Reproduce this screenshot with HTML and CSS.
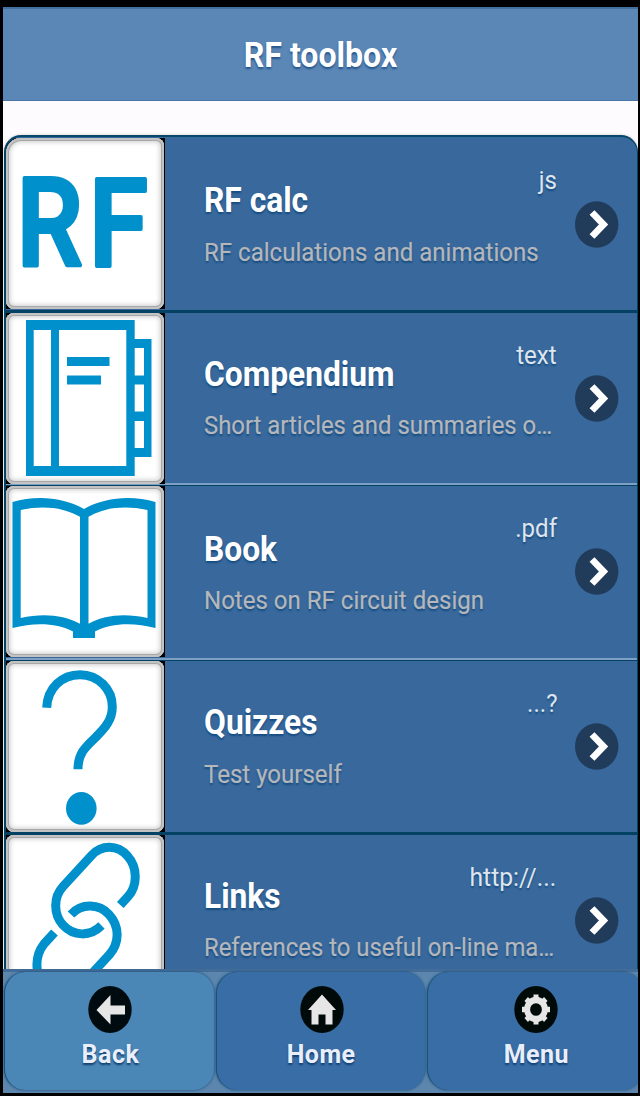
FILE: index.html
```html
<!DOCTYPE html>
<html lang="en">
<head>
<meta charset="utf-8">
<title>RF toolbox</title>
<link rel="stylesheet" href="styles.css">
</head>
<body>
<svg class="defs" width="0" height="0" aria-hidden="true">
  <symbol id="chevron" viewBox="0 0 44 47"><ellipse cx="21.700" cy="23.5" rx="21.700" ry="23.3" fill="#213b5b"/><path d="M17 11.5L28.500 23.5L17 35.5" fill="none" stroke="#fff" stroke-width="6.8"/></symbol>
</svg>
<div class="app">
  <header class="header"><h1 class="header-title">RF toolbox</h1></header>
  <main class="content">
    <ul class="list">
      <li class="row row-first">
        <div class="thumb">
          <svg class="art" viewBox="0 0 158 171"><g class="letters"><text transform="translate(10.800 128) scale(.85 1)">R</text><text transform="translate(83 128) scale(.87 1)">F</text></g></svg>
        </div>
        <div class="text"><h2 class="title">RF calc</h2><p class="sub">RF calculations and animations</p></div>
        <span class="aside">js</span>
        <svg class="chevron"><use href="#chevron"/></svg>
      </li>
      <li class="row row-compendium">
        <div class="thumb">
          <svg class="art" viewBox="0 0 158 171"><path class="fill" fill-rule="evenodd" d="M20 7H128.7V26H145.5V144H128.7V163H20ZM27.7 17V153H45V17ZM53 17V153H120.3V17ZM128.7 35V62.5H138V35ZM128.7 71.5V98.5H138V71.5ZM128.7 108V135H138V108ZM61 44H103.5V53H61ZM61 62.5H95V71.5H61Z"/></svg>
        </div>
        <div class="text"><h2 class="title">Compendium</h2><p class="sub">Short articles and summaries o…</p></div>
        <span class="aside">text</span>
        <svg class="chevron"><use href="#chevron"/></svg>
      </li>
      <li class="row row-book">
        <div class="thumb">
          <svg class="art" viewBox="0 0 158 171"><path class="fill" fill-rule="evenodd" d="M6.5 16C29 9.500 56 10.500 78 23C100 10.500 127 9.500 149.500 16V142C127 136 105 137 89 145.500V152H67V145.500C51 137 29 136 6.500 142ZM14.700 24V132C36 127 57 128.500 74 137.700V30.700C57 21 36 19.500 14.700 24ZM82.500 30.700V137.700C99 128.500 120 127 141.500 132V24C120 19.500 99 21 82.500 30.700Z"/></svg>
        </div>
        <div class="text"><h2 class="title">Book</h2><p class="sub">Notes on RF circuit design</p></div>
        <span class="aside">.pdf</span>
        <svg class="chevron"><use href="#chevron"/></svg>
      </li>
      <li class="row row-quizzes">
        <div class="thumb">
          <svg class="art" viewBox="0 0 158 171"><path class="line" d="M40.700 46.700C41.500 27 56 13.700 74 13.700C92 13.700 106.300 28 106.300 45.700C106.300 59 99 67 90 76C80 85.500 72 92 72 108.300"/><ellipse class="fill" cx="75.300" cy="147.300" rx="15.300" ry="16.400"/></svg>
        </div>
        <div class="text"><h2 class="title">Quizzes</h2><p class="sub">Test yourself</p></div>
        <span class="aside">...?</span>
        <svg class="chevron"><use href="#chevron"/></svg>
      </li>
      <li class="row row-links">
        <div class="thumb">
          <svg class="art" viewBox="0 0 158 171"><path class="line" d="M114.300 70L122 61.500C132 50.500 131.500 32 121.500 21C111.500 9.500 95.500 9.500 85.500 20.500L57 51.500C47 62.500 47.500 79.500 57 90C67.500 101.500 84 102 95.500 90.500M65 79.500C75.500 68 93 68.500 103 79.500C113.500 91 114 107 103.500 119.500L75 150.500C64 161.500 49 161 38.500 150C28.500 139 28.500 121 38 109L48.500 97.500"/></svg>
        </div>
        <div class="text"><h2 class="title">Links</h2><p class="sub">References to useful on-line ma…</p></div>
        <span class="aside">http://...</span>
        <svg class="chevron"><use href="#chevron"/></svg>
      </li>
    </ul>
  </main>
  <nav class="footer">
    <a class="tab tab-active">
      <svg class="tab-icon" viewBox="0 0 44 47"><ellipse cx="22" cy="23.500" rx="21.700" ry="23.500" fill="#000b10"/><path d="M8.500 24L22.500 9V19.500H37V28.500H22.500V38.500Z" fill="#e6e6e6"/></svg>
      <span class="tab-label">Back</span>
    </a>
    <a class="tab">
      <svg class="tab-icon" viewBox="0 0 44 47"><ellipse cx="22" cy="23.500" rx="21.700" ry="23.500" fill="#000a09"/><path d="M22 8.500L36 24H32.500V38.500H25.500V28.500H18.500V38.500H11.500V24H8Z" fill="#e6e6e6"/></svg>
      <span class="tab-label">Home</span>
    </a>
    <a class="tab">
      <svg class="tab-icon" viewBox="0 0 44 47"><ellipse cx="22" cy="23.500" rx="21.700" ry="23.500" fill="#000a09"/><g transform="translate(22 23.500) scale(1 1.070)"><circle r="8.900" fill="none" stroke="#e6e6e6" stroke-width="6"/><path d="M0-14V-10M0 14V10M-14 0H-10M14 0H10M-9.800-9.800L-7-7M9.800-9.800L7-7M-9.800 9.800L-7 7M9.800 9.800L7 7" stroke="#e6e6e6" stroke-width="5"/></g></svg>
      <span class="tab-label">Menu</span>
    </a>
  </nav>
</div>
</body>
</html>
```
FILE: styles.css
```css
* { box-sizing: border-box; }
body { margin: 0; height: 1096px; padding: 7px 2px 3px 3px; overflow: hidden; background: #000; font-family: Roboto, "Liberation Sans", sans-serif; }
h1, h2, p, ul { margin: 0; padding: 0; }
.defs { display: block; height: 0; }
.app { height: 1086px; display: flex; flex-direction: column; overflow: hidden; background: #fefbff; }

.header { flex: none; height: 94px; display: flex; align-items: center; justify-content: center; background: #5a87b6; border-top: 2px solid #42709f; border-bottom: 1px solid #4875a5; }
.header-title { color: #fff; font-size: 34.500px; line-height: 40px; font-weight: 700; text-shadow: 0 2px 2px #25558a; transform: scaleX(.93); }

.content { flex: 1; min-height: 0; overflow: hidden; padding: 34px 0 0 1px; }
.list { list-style: none; overflow: hidden; height: 860px; border: 2px solid #044264; border-right-width: 1px; border-top-color: #07476b; border-radius: 17px 17px 0 0; background: #39699c; box-shadow: 0 0 3px #0003; }
.row { --drop: 0px; height: 174px; display: grid; grid-template-columns: 159px 1fr 44px 18px; border-bottom: 2px solid #044264; }
.row-first { height: 176px; border-bottom-width: 3px; --drop: 1px; }
.row-compendium { height: 173px; border-bottom: 0; box-shadow: inset 0 -1px #044264, inset 0 -3px #7da0c4; }
.row-book { height: 175px; border-bottom: 1px solid #044264; box-shadow: inset 0 -2px #7da0c4; }
.row-quizzes { height: 174px; border-bottom-width: 3px; }
.thumb { grid-area: 1 / 1; width: 159px; height: 171px; background: #000; }
.art { display: block; width: 158px; height: 171px; background: #fff; border-radius: 8px; box-shadow: inset 0 0 0 2px #c3c3c3, inset 0 0 0 3px #a8a8a8, inset 0 0 5px 4px #ccc; }
.row-first .thumb { margin-top: 1px; }
.row-first .art { border-top-left-radius: 15px; }
.fill { fill: #0090cb; }
.line { fill: none; stroke: #0090cb; stroke-width: 9; }
.letters { font: 500 123px Roboto, sans-serif; fill: #0090cb; stroke: #0090cb; stroke-width: 4; stroke-linejoin: round; }
.text { grid-area: 1 / 2; min-width: 0; padding: calc(41px + var(--drop)) 0 0 39px; white-space: nowrap; }
.row-first .text { padding-top: 43px; }
.row-book .text { padding-top: 43px; }
.title { width: max-content; color: #fff; font-size: 34.500px; line-height: 40px; font-weight: 700; text-shadow: 0 2px 2px #164c80; transform: scaleX(.92); transform-origin: left; }
.sub { width: max-content; margin-top: 15px; color: #b5b7bb; font-size: 26.500px; line-height: 32px; -webkit-text-stroke: .2px #b5b7bb; text-shadow: 0 2px 2px #164c80; transform: scaleX(.907); transform-origin: left; }
.row-first .sub, .row-quizzes .sub { margin-top: 16px; }
.row-compendium .sub, .row-links .sub { transform: scaleX(.901); }
.aside { grid-area: 1 / 2; justify-self: end; margin: calc(26px + var(--drop)) 18px 0 0; height: 32px; color: #dfe5ed; font-size: 26.500px; line-height: 32px; text-shadow: 0 2px 2px #164c80; transform: scaleX(.907); transform-origin: right; }
.row-links .aside { margin-right: 19px; transform: scaleX(.93); }
.chevron { grid-area: 1 / 3; width: 44px; height: 47px; margin-top: 62px; }
.row-first .chevron { margin-top: 64px; }

.footer { flex: none; height: 124px; display: grid; grid-template-columns: 210px 209px 216px; column-gap: 2px; padding: 0 0 2px 1px; background: #5c86ad; border-top: 3px solid #436d98; }
.tab { display: flex; flex-direction: column; align-items: center; height: 118px; padding: 14px 0 0 1px; border-radius: 21px; background: #396da6; border-left: 1px solid #195274; box-shadow: 0 0 3px #174a78; }
.tab-active { background: #4a87b7; }
.tab-icon { width: 44px; height: 47px; }
.tab-label { margin-top: 6px; color: #e9effa; font-size: 25.500px; line-height: 30px; font-weight: 700; letter-spacing: .5px; text-shadow: 0 2px 2px #123f70; transform: scaleX(.98); }
```
